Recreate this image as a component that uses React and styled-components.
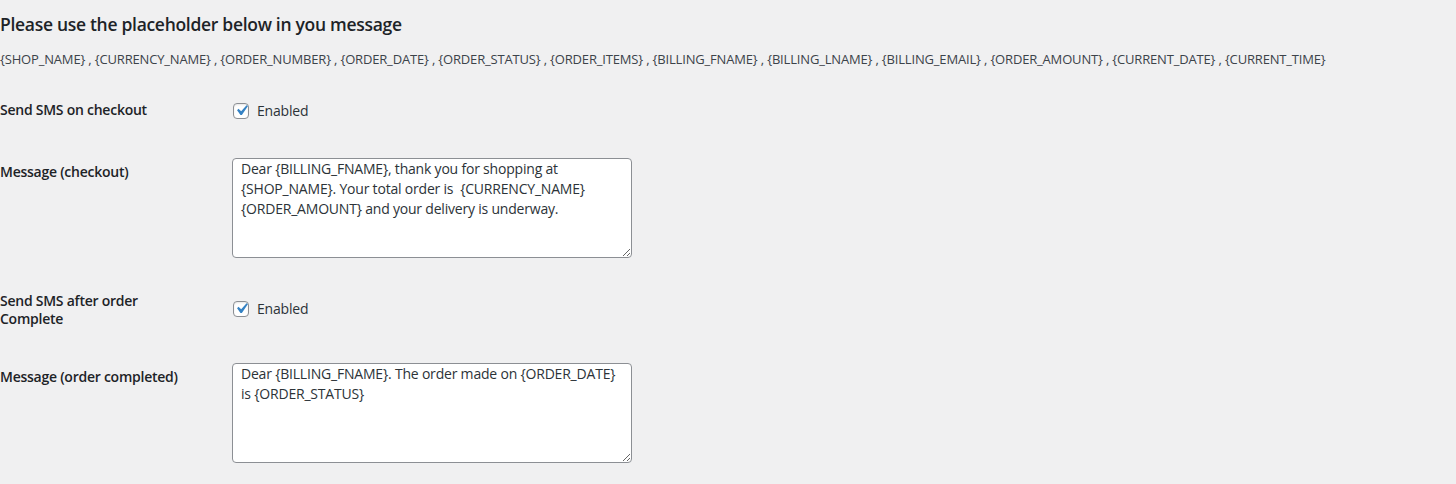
import React from "react";
import styled, { createGlobalStyle } from "styled-components";

const GlobalStyle = createGlobalStyle`
  html, body {
    margin: 0;
    padding: 0;
    background: #f0f0f1;
  }
  body {
    font-family: "Open Sans", "Noto Sans", sans-serif;
    font-size: 14px;
    color: #1d2327;
  }
`;

const Page = styled.div`
  width: 1456px;
  height: 484px;
  overflow: hidden;
`;

const Heading = styled.h2`
  margin: 12px 0 13px;
  font-size: 17.5px;
  line-height: 24px;
  font-weight: 600;
  letter-spacing: -0.3px;
  color: #1d2327;
`;

const Placeholders = styled.p`
  margin: 0 0 12px;
  font-size: 13px;
  line-height: 20px;
  letter-spacing: -0.17px;
  color: #3c434a;
  white-space: nowrap;
`;

const Row = styled.div`
  display: grid;
  grid-template-columns: 232px 420px;
`;

const Head = styled.div`
  box-sizing: border-box;
  padding: 20px 32px 20px 0;
  line-height: 18px;
  font-weight: 600;
  font-size: 14px;
  letter-spacing: -0.25px;
  align-self: start;
`;

const Cell = styled.div`
  box-sizing: border-box;
  padding: 15px 0 14px;
  display: flex;
  align-items: center;
  min-height: ${({ $min }) => ($min ? `${$min}px` : "auto")};
`;

const CheckLabel = styled.label`
  display: flex;
  align-items: center;
  gap: 8px;
  color: #2c3338;
  line-height: 20px;
  letter-spacing: -0.2px;
  margin-bottom: 4px;
  margin-left: 1px;
`;

const Box = styled.span`
  width: 14px;
  height: 14px;
  border: 1px solid #8c8f94;
  border-radius: 4px;
  background: #fff;
  display: inline-flex;
  align-items: center;
  justify-content: center;
  overflow: visible;
  box-shadow: inset 0 1px 2px rgba(0, 0, 0, 0.1);

  svg {
    flex: none;
  }
`;

const TextArea = styled.textarea`
  box-sizing: border-box;
  width: 400px;
  height: 100px;
  padding: 0 8px;
  border: 1px solid #8c8f94;
  border-radius: 4px;
  background: #fff;
  color: #2c3338;
  font-family: "Open Sans", "Noto Sans", sans-serif;
  font-size: 14px;
  line-height: 20px;
  letter-spacing: -0.2px;
  margin: 0;
  display: block;
  resize: vertical;
`;

function Checkbox() {
  return (
    <CheckLabel>
      <Box>
        <svg width="21" height="21" viewBox="0 0 20 20">
          <path
            d="M14.83 4.89l1.34.94-5.81 8.38H9.02L5.78 9.67l1.34-1.25 2.57 2.4z"
            fill="#3582c4"
          />
        </svg>
      </Box>
      Enabled
    </CheckLabel>
  );
}

const placeholders = [
  "SHOP_NAME",
  "CURRENCY_NAME",
  "ORDER_NUMBER",
  "ORDER_DATE",
  "ORDER_STATUS",
  "ORDER_ITEMS",
  "BILLING_FNAME",
  "BILLING_LNAME",
  "BILLING_EMAIL",
  "ORDER_AMOUNT",
  "CURRENT_DATE",
  "CURRENT_TIME",
];

export default function App() {
  return (
    <Page>
      <GlobalStyle />
      <Heading>Please use the placeholder below in you message</Heading>
      <Placeholders>{placeholders.map((p) => `{${p}}`).join(" , ")}</Placeholders>

      <Row>
        <Head>Send SMS on checkout</Head>
        <Cell $min={62}>
          <Checkbox />
        </Cell>
      </Row>
      <Row>
        <Head>Message (checkout)</Head>
        <Cell>
          <TextArea
            readOnly
            defaultValue="Dear {BILLING_FNAME}, thank you for shopping at {SHOP_NAME}. Your total order is  {CURRENCY_NAME} {ORDER_AMOUNT} and your delivery is underway."
          />
        </Cell>
      </Row>
      <Row>
        <Head>Send SMS after order Complete</Head>
        <Cell>
          <Checkbox />
        </Cell>
      </Row>
      <Row>
        <Head>Message (order completed)</Head>
        <Cell>
          <TextArea
            readOnly
            defaultValue="Dear {BILLING_FNAME}. The order made on {ORDER_DATE} is {ORDER_STATUS}"
          />
        </Cell>
      </Row>
    </Page>
  );
}
